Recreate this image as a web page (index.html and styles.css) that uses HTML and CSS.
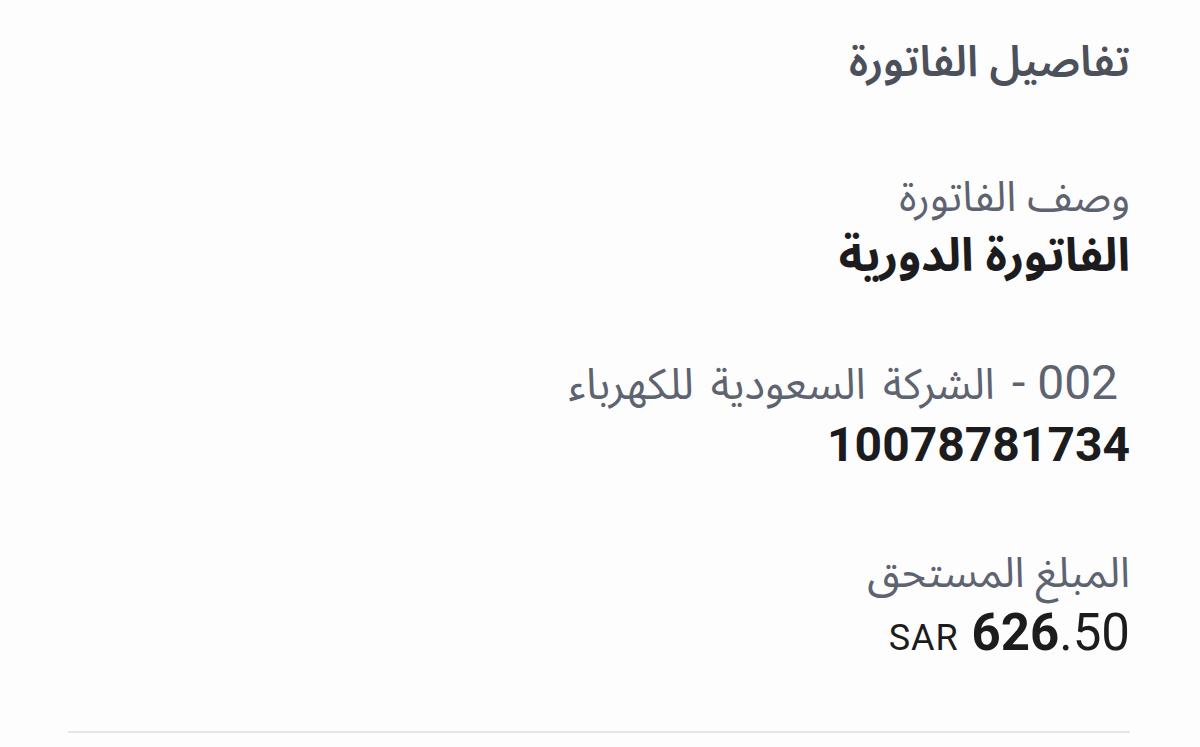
FILE: index.html
```html
<!DOCTYPE html>
<html lang="ar" dir="rtl">
<head>
  <meta charset="UTF-8">
  <meta name="viewport" content="width=device-width, initial-scale=1.0">
  <title>تفاصيل الفاتورة</title>
  <link rel="stylesheet" href="styles.css">
</head>
<body>
  <div class="invoice">
    <h2 class="invoice-title">تفاصيل الفاتورة</h2>

    <!-- وصف -->
    <div class="field">
      <div class="field-label">وصف الفاتورة</div>
      <div class="field-value">الفاتورة الدورية</div>
    </div>

    <!-- الجهة ورقم الحساب -->
    <div class="field">
      <div class="field-label company"><span class="num">&nbsp;002 -</span> الشركة السعودية للكهرباء</div>
      <div class="field-value num">10078781734</div>
    </div>

    <!-- المبلغ -->
    <div class="field">
      <div class="field-label">المبلغ المستحق</div>
      <div class="field-value num amount">
        <span class="currency">SAR</span> <b>626</b>.50
      </div>
    </div>

    <hr class="divider">
  </div>
</body>
</html>
```

FILE: styles.css
```css
body {
  margin: 0;
  padding: 0;
  background-color: #fdfdfd;
  font-family: "Noto Sans Arabic", "DejaVu Sans", sans-serif;
}

.invoice {
  padding: 34px 70px 0 68px;
}

.invoice-title {
  margin: 0;
  font-size: 43px;
  line-height: 57px;
  font-weight: 600;
  color: #4b505b;
}

.field {
  margin-top: 78px;
}

.field + .field {
  margin-top: 72px;
}

.field-label {
  font-size: 42px;
  line-height: 57px;
  color: #5d6370;
}

.field-label.company {
  font-size: 43px;
  word-spacing: 6px;
}

.field-value {
  margin-top: 2px;
  font-size: 46px;
  line-height: 57px;
  font-weight: 700;
  color: #1c1c1e;
}

.num {
  font-family: Roboto, "DejaVu Sans", sans-serif;
  font-size: 48px;
  font-weight: 400;
  word-spacing: 0;
}

.field-label .num {
  line-height: 1;
}

.field-value.num {
  font-weight: 700;
}

.field-value.amount {
  font-size: 51px;
  font-weight: 400;
}

.amount b {
  font-weight: 700;
}

.currency {
  font-size: 36px;
  line-height: 1;
  letter-spacing: 1px;
}

.divider {
  margin: 70px 0 0;
  border: none;
  height: 2px;
  background-color: #e6e6ea;
}
```
